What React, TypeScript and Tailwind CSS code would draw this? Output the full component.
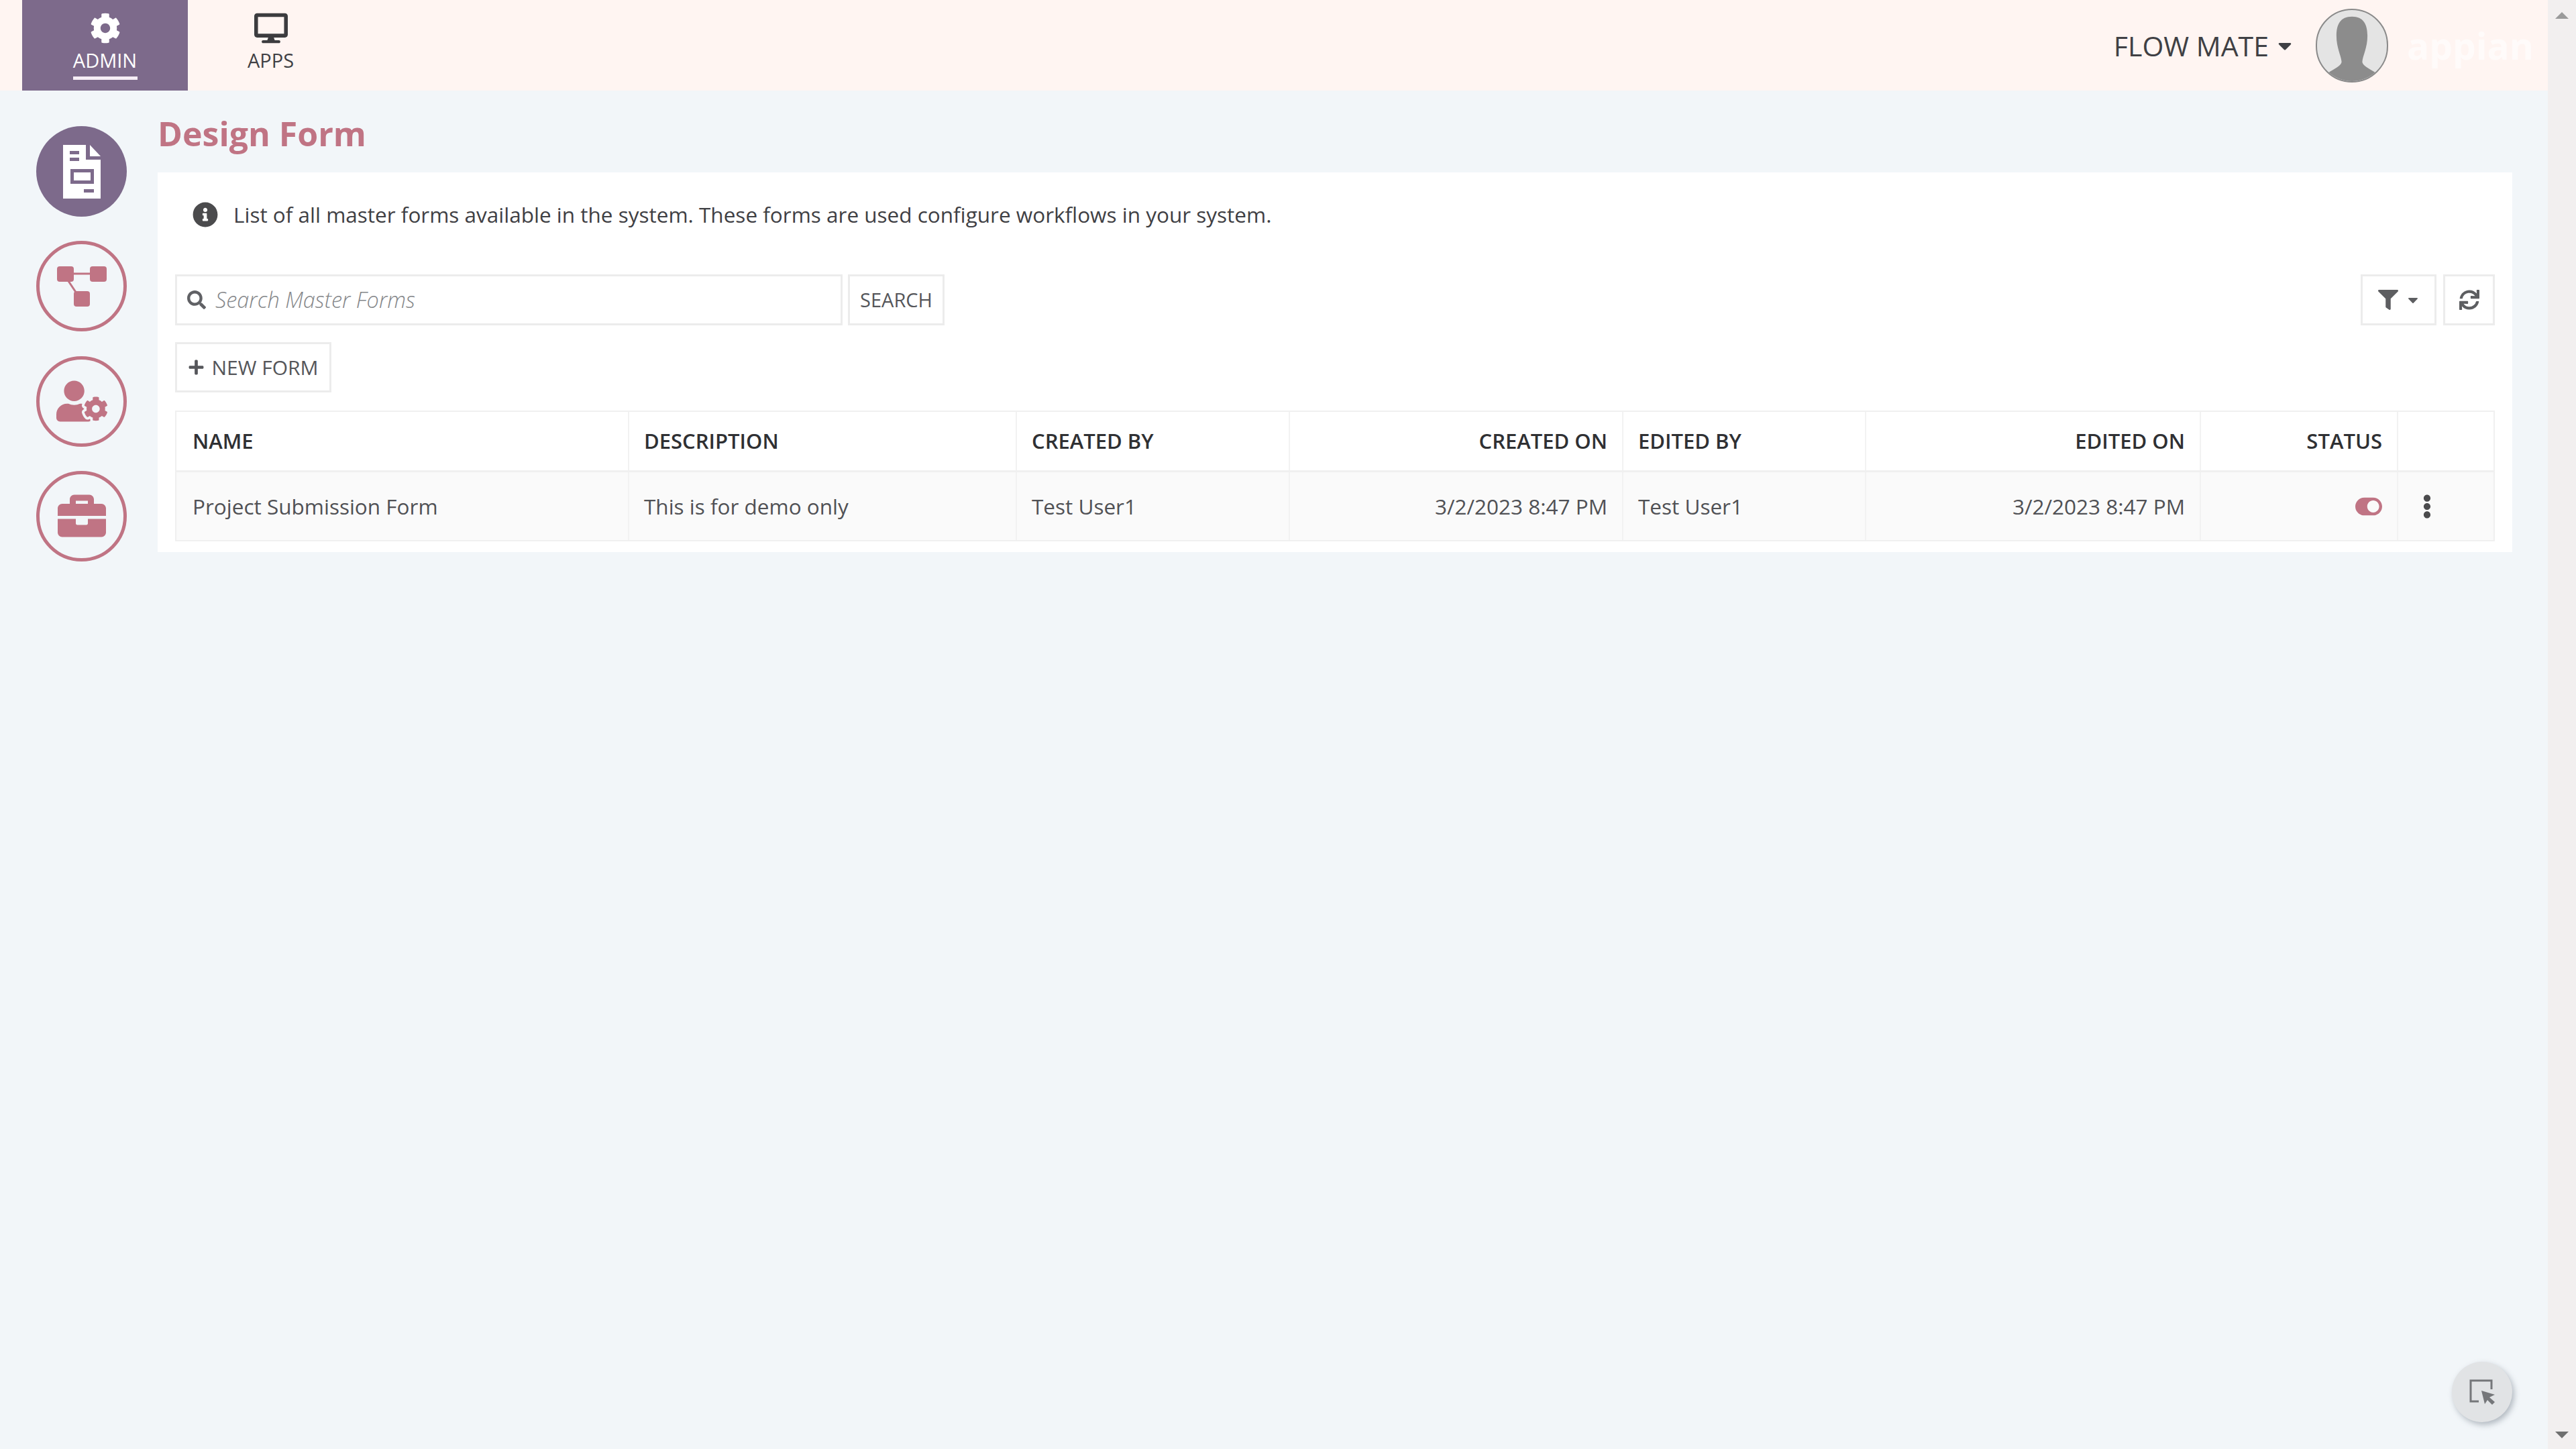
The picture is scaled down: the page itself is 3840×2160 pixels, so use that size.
import {
  FaBriefcase,
  FaCaretDown,
  FaCog,
  FaDesktop,
  FaEllipsisV,
  FaFilter,
  FaInfoCircle,
  FaPlus,
  FaSearch,
  FaSync,
  FaToggleOn,
  FaUserCog,
} from "react-icons/fa";

const columns = [
  { title: "NAME", value: "Project Submission Form", width: "w-[675px]", pad: "pl-[24px] pr-[22px]" },
  { title: "DESCRIPTION", value: "This is for demo only", width: "w-[578px]", pad: "px-[22px]" },
  { title: "CREATED BY", value: "Test User1", width: "w-[407px]", pad: "px-[22px]" },
  { title: "CREATED ON", value: "3/2/2023 8:47 PM", width: "w-[497px]", pad: "px-[22px]", right: true },
  { title: "EDITED BY", value: "Test User1", width: "w-[362px]", pad: "px-[22px]" },
  { title: "EDITED ON", value: "3/2/2023 8:47 PM", width: "w-[499px]", pad: "px-[22px]", right: true },
];

function FormIcon() {
  return (
    <svg viewBox="0 0 56 80" className="h-[80px] w-[56px]">
      <path
        fill="#ffffff"
        fillRule="evenodd"
        d="M0 0H34V22H56V80H0ZM40 0L56 17H40ZM10 9V14H24V9ZM10 19V24H24V19ZM11 36V58H46V36ZM16 41H41V53H16ZM31 66V71H46V66Z"
      />
    </svg>
  );
}

function WorkflowIcon() {
  return (
    <svg viewBox="0 0 74 60" className="h-[60px] w-[74px]">
      <rect x="0" y="0" width="25" height="23" rx="4" fill="#c07484" />
      <rect x="49" y="0" width="25" height="23" rx="4" fill="#c07484" />
      <rect x="25" y="37" width="24" height="23" rx="4" fill="#c07484" />
      <path d="M24 11H50M17 22L29 40" stroke="#c07484" strokeWidth="3" fill="none" />
    </svg>
  );
}

function CursorBoxIcon() {
  return (
    <svg viewBox="0 0 38 38" className="h-[38px] w-[38px]" fill="none">
      <path d="M14 33H2V2H33V15" stroke="#75777a" strokeWidth="3" />
      <path d="M18 17L38 23L30 27L38 34L34 38L27 31L23 37Z" fill="#75777a" />
    </svg>
  );
}

function Avatar() {
  return (
    <div className="ml-[32px] h-[110px] w-[108px] overflow-hidden rounded-full border-2 border-[#8a8a8a] bg-[#e4e4e4]">
      <svg viewBox="0 0 108 110" className="h-full w-full">
        <path
          fill="#8c8c8c"
          d="M54 10C36 10 30 22 30 40C30 58 37 70 38 80C38 86 28 90 16 98L16 110H92V98C80 90 70 86 70 80C71 70 78 58 78 40C78 22 72 10 54 10Z"
        />
      </svg>
    </div>
  );
}

function SideButton({ active, children }: { active?: boolean; children: React.ReactNode }) {
  return (
    <div
      className={
        active
          ? "flex h-[135px] w-[135px] items-center justify-center rounded-full bg-[#7d6a8b]"
          : "flex h-[135px] w-[135px] items-center justify-center rounded-full border-[5px] border-[#c07484] bg-transparent"
      }
    >
      {children}
    </div>
  );
}

export default function App() {
  return (
    <div className="flex h-[2160px] w-[3840px] overflow-hidden bg-[#f2f6f9] font-['Open_Sans',sans-serif] text-[#3f4044]">
      <div className="relative flex w-[3798px] flex-col">
        <header className="flex h-[135px] shrink-0 items-center bg-[#fff5f2] pl-[33px] pr-[32px]">
          <div className="flex h-full w-[247px] flex-col items-center bg-[#7d6a8b] pt-[19px] text-white">
            <FaCog className="h-[46px] w-[46px]" />
            <div className="mt-[5px] text-[29px] leading-[40px]">ADMIN</div>
            <div className="mt-[4px] h-[5px] w-[96px] bg-[#f6eef6]" />
          </div>
          <div className="flex h-full w-[247px] flex-col items-center pt-[19px]">
            <FaDesktop className="h-[46px] w-[50px] text-[#3c3c3f]" />
            <div className="mt-[5px] text-[29px] leading-[40px]">APPS</div>
          </div>
          <div className="ml-auto flex items-center">
            <span className="text-[41px] font-medium leading-[50px]">FLOW MATE</span>
            <FaCaretDown className="ml-[10px] h-[32px] w-[28px]" />
            <Avatar />
            <span className="ml-[28px] w-[178px] text-[55px] font-bold leading-[70px] text-[#fffbfa]">appian</span>
          </div>
        </header>

        <div className="flex flex-1">
          <nav className="flex w-[235px] shrink-0 flex-col gap-[36.33px] pl-[54px] pt-[53px]">
            <SideButton active>
              <FormIcon />
            </SideButton>
            <SideButton>
              <WorkflowIcon />
            </SideButton>
            <SideButton>
              <FaUserCog className="h-[66px] w-[76px] text-[#c07484]" />
            </SideButton>
            <SideButton>
              <FaBriefcase className="h-[72px] w-[72px] text-[#c07484]" />
            </SideButton>
          </nav>

          <main className="flex-1">
            <h1 className="flex h-[122px] items-center pt-[6px] text-[50px] font-bold text-[#c07484]">Design Form</h1>

            <section className="h-[566px] w-[3510px] bg-white pl-[26px] pr-[26px]">
              <div className="flex h-[126px] items-center pl-[26px]">
                <FaInfoCircle className="h-[38px] w-[38px] text-[#4b4b4d]" />
                <p className="ml-[23px] text-[31.5px] leading-[44px]">
                  List of all master forms available in the system. These forms are used configure workflows in your
                  system.
                </p>
              </div>

              <div className="mt-[26px] flex h-[76px] items-center">
                <div className="flex h-full w-[995px] items-center border-[3px] border-[#ececec] pl-[15px]">
                  <FaSearch className="h-[28px] w-[28px] text-[#606165]" />
                  <span className="ml-[14px] text-[32.5px] font-light italic text-[#85878a]">Search Master Forms</span>
                </div>
                <button className="ml-[8px] flex h-full w-[144px] items-center justify-center border-[3px] border-[#ececec] text-[29px] font-medium text-[#55565a]">
                  SEARCH
                </button>
                <button className="ml-auto flex h-full w-[113px] items-center justify-center gap-[12px] border-[3px] border-[#ececec] text-[#5d5e61]">
                  <FaFilter className="h-[34px] w-[30px]" />
                  <FaCaretDown className="h-[24px] w-[20px]" />
                </button>
                <button className="ml-[10px] flex h-full w-[77px] items-center justify-center border-[3px] border-[#ececec] text-[#5d5e61]">
                  <FaSync className="h-[30px] w-[30px]" />
                </button>
              </div>

              <button className="mt-[25px] flex h-[75px] w-[233px] items-center justify-center gap-[10px] border-[3px] border-[#ececec] text-[30px] font-medium text-[#55565a]">
                <FaPlus className="h-[25px] w-[25px]" />
                NEW FORM
              </button>

              <div className="mt-[27px] w-[3458px] border-[2px] border-[#f0f0f0]">
                <div className="flex h-[90px] border-b-[3px] border-[#f0f0f0]">
                  {columns.map((col) => (
                    <div
                      key={col.title}
                      className={`flex ${col.width} items-center border-r-[2px] border-[#f2f2f2] ${col.pad} text-[31px] font-semibold text-[#2f3033] ${col.right ? "justify-end" : ""}`}
                    >
                      {col.title}
                    </div>
                  ))}
                  <div className="flex w-[294px] items-center justify-end border-r-[2px] border-[#f2f2f2] px-[22px] text-[31px] font-semibold text-[#2f3033]">
                    STATUS
                  </div>
                  <div className="flex-1" />
                </div>
                <div className="flex h-[101px] bg-[#fafafa]">
                  {columns.map((col) => (
                    <div
                      key={col.title}
                      className={`flex ${col.width} items-center border-r-[2px] border-[#f2f2f2] ${col.pad} text-[31.5px] text-[#505155] ${col.right ? "justify-end" : ""}`}
                    >
                      {col.value}
                    </div>
                  ))}
                  <div className="flex w-[294px] items-center justify-end border-r-[2px] border-[#f2f2f2] pr-[22px]">
                    <FaToggleOn className="h-[40px] w-[40px] text-[#c07484]" />
                  </div>
                  <div className="flex flex-1 items-center pl-[25px]">
                    <FaEllipsisV className="h-[36px] w-[36px] text-[#4b4b4d]" />
                  </div>
                </div>
              </div>
            </section>
          </main>
        </div>

        <button className="absolute left-[3655px] top-[2030px] flex h-[90px] w-[90px] items-center justify-center rounded-full bg-[#e1e3e5] shadow-[3px_4px_8px_rgba(100,110,125,0.45)]">
          <CursorBoxIcon />
        </button>
      </div>

      <aside className="flex w-[42px] shrink-0 flex-col items-center justify-between bg-[#f2efef] pb-[16px] pt-[18px]">
        <div className="h-0 w-0 border-x-[10px] border-b-[10px] border-x-transparent border-b-[#9a9a9a]" />
        <div className="h-0 w-0 border-x-[10px] border-t-[10px] border-x-transparent border-t-[#6f6f6f]" />
      </aside>
    </div>
  );
}
